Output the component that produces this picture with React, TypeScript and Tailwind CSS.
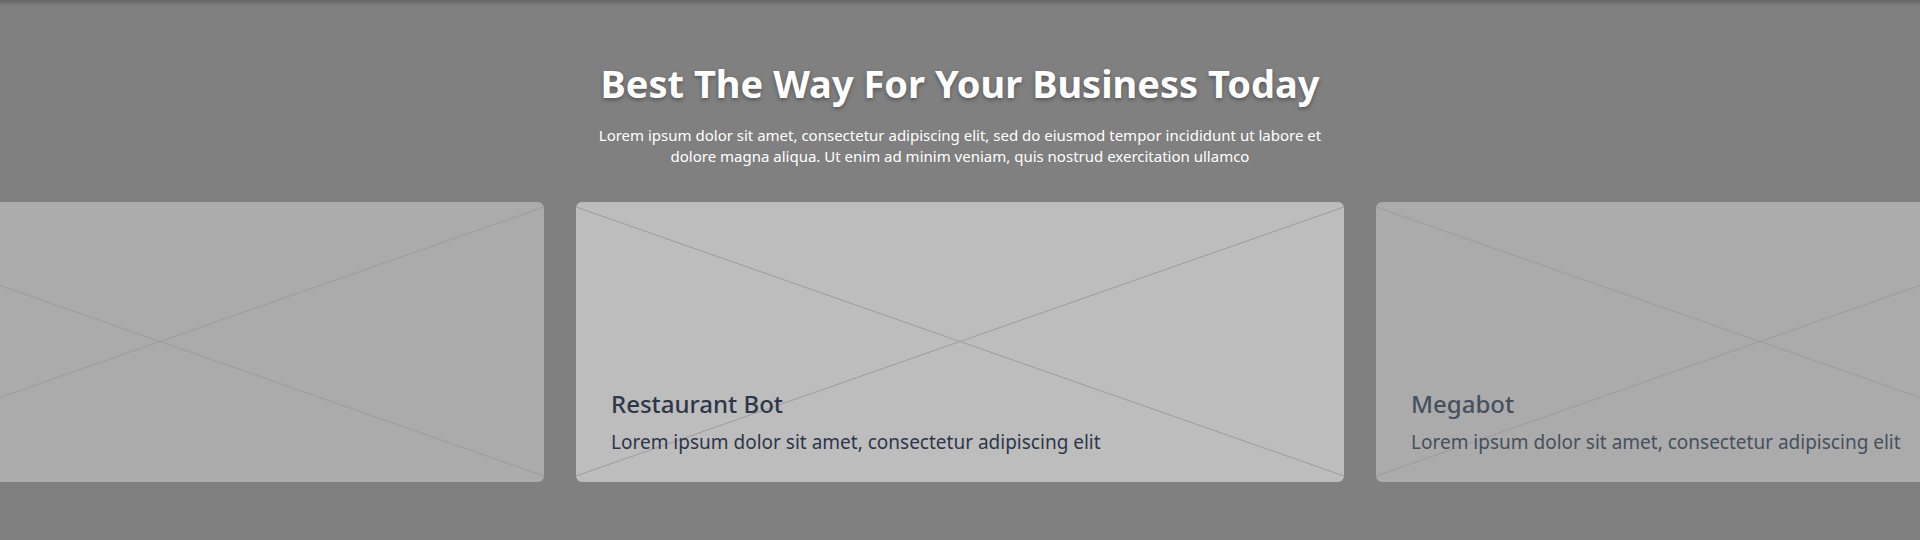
import { FC } from "react";

type Bot = { title?: string; text?: string; active?: boolean };

const bots: Bot[] = [
  {},
  { title: "Restaurant Bot", text: "Lorem ipsum dolor sit amet, consectetur adipiscing elit", active: true },
  { title: "Megabot", text: "Lorem ipsum dolor sit amet, consectetur adipiscing elit" },
];

const Placeholder: FC = () => (
  <svg
    className="absolute inset-0 h-full w-full"
    viewBox="0 0 768 280"
    preserveAspectRatio="none"
  >
    <line x1="0" y1="5" x2="768" y2="274" stroke="#9c9c9c" strokeWidth="1" vectorEffect="non-scaling-stroke" />
    <line x1="0" y1="274" x2="768" y2="5" stroke="#9c9c9c" strokeWidth="1" vectorEffect="non-scaling-stroke" />
  </svg>
);

const BotCard: FC<{ bot: Bot }> = ({ bot }) => (
  <div
    className={`relative flex h-[280px] w-[768px] shrink-0 flex-col justify-end overflow-hidden rounded-md pb-[26px] pl-[35px] ${
      bot.active ? "bg-[#bdbdbd]" : "bg-[#ababab]"
    }`}
  >
    <Placeholder />
    {bot.title && (
      <div className={`relative ${bot.active ? "text-[#2d3748]" : "text-[#46505e]"}`}>
        <h3 className="text-[24px] font-medium leading-[32px]">{bot.title}</h3>
        <p className="mt-[8px] text-[19px] leading-[28px]">{bot.text}</p>
      </div>
    )}
  </div>
);

export default function App() {
  return (
    <div
      className="h-[540px] w-[1920px] overflow-hidden bg-[#808080]"
      style={{ fontFamily: '"Noto Sans", "Open Sans", sans-serif' }}
    >
      <div className="h-[6px] bg-gradient-to-b from-[#666666] to-[#808080]" />
      <div className="flex flex-col items-center pt-[54px]">
        <h2 className="text-[38px] font-bold leading-[46px] text-white [text-shadow:0_2px_4px_rgba(0,0,0,0.35)]">
          Best The Way For Your Business Today
        </h2>
        <p className="mt-[19px] w-[740px] text-center text-[15px] leading-[21px] text-white">
          Lorem ipsum dolor sit amet, consectetur adipiscing elit, sed do eiusmod tempor incididunt ut labore et
          <br />
          dolore magna aliqua. Ut enim ad minim veniam, quis nostrud exercitation ullamco
        </p>
      </div>
      <div className="mt-[35px] flex justify-center gap-[32px]">
        {bots.map((b, i) => (
          <BotCard key={i} bot={b} />
        ))}
      </div>
    </div>
  );
}
